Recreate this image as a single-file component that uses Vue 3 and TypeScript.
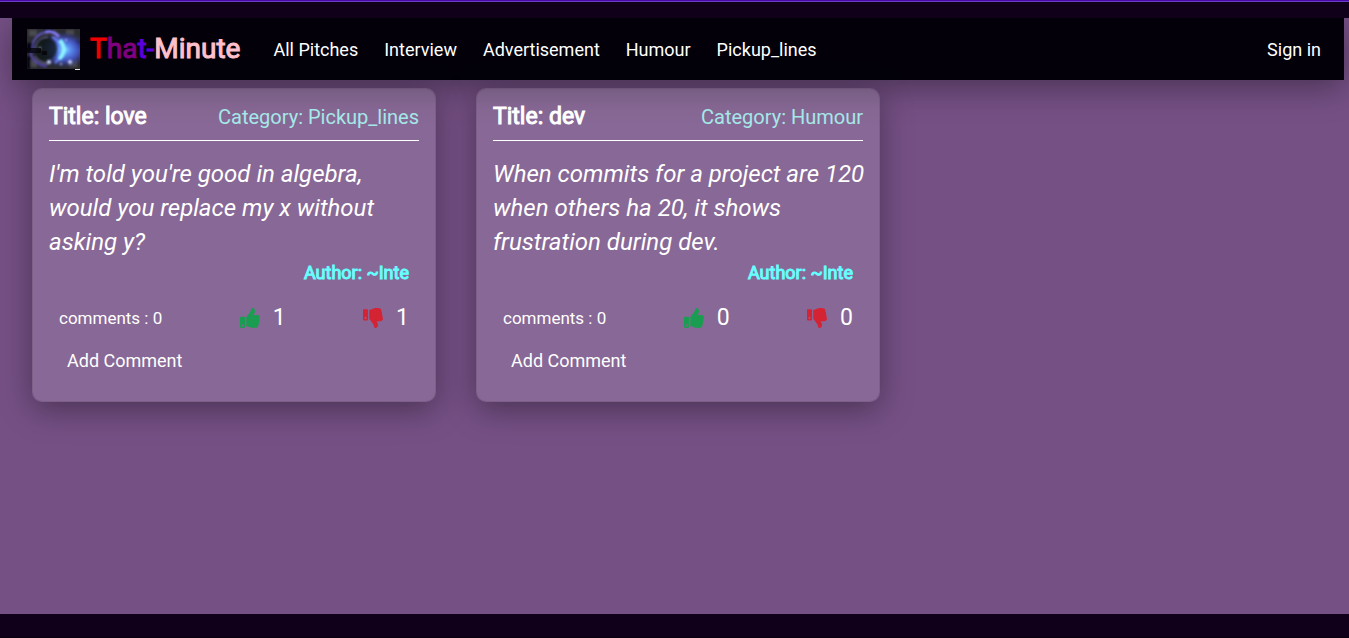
<script setup lang="ts">
interface Pitch {
  id: number
  title: string
  category: string
  text: string
  author: string
  comments: number
  likes: number
  dislikes: number
}

const categories: string[] = ['All Pitches', 'Interview', 'Advertisement', 'Humour', 'Pickup_lines']

const pitches: Pitch[] = [
  {
    id: 1,
    title: 'love',
    category: 'Pickup_lines',
    text: "I'm told you're good in algebra, would you replace my x without asking y?",
    author: '~Inte',
    comments: 0,
    likes: 1,
    dislikes: 1,
  },
  {
    id: 2,
    title: 'dev',
    category: 'Humour',
    text: 'When commits for a project are 120 when others ha 20, it shows frustration during dev.',
    author: '~Inte',
    comments: 0,
    likes: 0,
    dislikes: 0,
  },
]
</script>

<template>
  <div class="page">
    <div class="content">
      <nav class="navbar">
        <a class="brand" href="#">
          <svg class="logo" viewBox="0 0 53 41" aria-hidden="true">
            <defs>
              <radialGradient id="glow" cx="0.7" cy="0.52" r="0.46">
                <stop offset="0" stop-color="#8cdcff" />
                <stop offset="0.25" stop-color="#5a92f4" />
                <stop offset="0.6" stop-color="#4656cc" stop-opacity="0.85" />
                <stop offset="1" stop-color="#30307a" stop-opacity="0" />
              </radialGradient>
              <filter id="soft" x="-20%" y="-20%" width="140%" height="140%">
                <feGaussianBlur stdDeviation="0.8" />
              </filter>
            </defs>
            <rect width="53" height="40" fill="#2b2c30" />
            <g filter="url(#soft)">
              <path d="M0 14h7v10H0zM0 27h3v13H0zM17 0h9v3h-9zM46 12h7v8h-7z" fill="#050508" />
              <path d="M2 1h8v6H2zM39 1h8v5h-8zM4 31h6v7H4zM42 31h8v7h-8z" fill="#4a4c50" />
            </g>
            <rect width="53" height="40" fill="url(#glow)" />
            <ellipse cx="18" cy="20" rx="12" ry="12" fill="#101218" opacity="0.8" filter="url(#soft)" />
            <g fill="none" filter="url(#soft)">
              <path d="M6 24C3 12 11 3 22 3" stroke="#6457c4" stroke-width="2" />
              <path d="M3 22c1 8 8 15 17 15" stroke="#5a48c0" stroke-width="2" />
              <path d="M9 23C7 14 13 8 21 8M8 27c3 5 8 8 14 7" stroke="#8d8cc4" stroke-width="1" />
              <path d="M18 3c7-2 11 1 14 5" stroke="#8a80ff" stroke-width="3" />
              <path d="M25 8c10 4 12 18 3 26" stroke="#6f86ff" stroke-width="2" />
              <path d="M33 11c5 6 5 14-1 19" stroke="#8cf4ff" stroke-width="4" />
            </g>
            <g fill="#c8d6ff" filter="url(#soft)">
              <circle cx="13" cy="19" r="1" />
              <circle cx="39" cy="11" r="1" />
              <circle cx="43" cy="33" r="2" />
              <circle cx="34" cy="35" r="1" />
              <circle cx="22" cy="33" r="2" />
            </g>
            <path d="M0 19h14v5H0zM15 22h5v4h-5z" fill="#040408" opacity="0.8" />
            <path d="M48 40h5v1h-5z" fill="#e8e8dc" />
          </svg>
          <span class="brand-name"
            ><span class="red">T</span><span class="purple">ha</span><span class="indigo">t-</span>Minute</span
          >
        </a>
        <ul class="links">
          <li v-for="name in categories" :key="name"><a href="#">{{ name }}</a></li>
        </ul>
        <a class="sign-in" href="#">Sign in</a>
      </nav>

      <main class="grid">
        <article v-for="pitch in pitches" :key="pitch.id" class="card">
          <header class="card-head">
            <h2>Title: {{ pitch.title }}</h2>
            <span class="category">Category: {{ pitch.category }}</span>
          </header>
          <p class="text">{{ pitch.text }}</p>
          <p class="author">Author: {{ pitch.author }}</p>
          <div class="stats">
            <span class="comments">comments : {{ pitch.comments }}</span>
            <button class="vote up" type="button" aria-label="Like">
              <svg viewBox="0 0 512 512" aria-hidden="true">
                <path
                  d="M104 224H24c-13.255 0-24 10.745-24 24v240c0 13.255 10.745 24 24 24h80c13.255 0 24-10.745 24-24V248c0-13.255-10.745-24-24-24zM64 472c-13.255 0-24-10.745-24-24s10.745-24 24-24 24 10.745 24 24-10.745 24-24 24zM384 81.452c0 42.416-25.97 66.208-33.277 94.548h101.723c33.397 0 59.397 27.746 59.553 58.098.084 17.938-7.546 37.249-19.439 49.197l-.11.11c9.836 23.337 8.237 56.037-9.308 79.469 8.681 25.895-.069 57.704-16.382 74.757 4.298 17.598 2.244 32.575-6.148 44.632C440.202 511.587 389.616 512 346.839 512l-2.845-.001c-48.287-.017-87.806-17.598-119.56-31.725-15.957-7.099-36.821-15.887-52.651-16.178-6.54-.12-11.783-5.457-11.783-11.998v-213.77c0-3.2 1.282-6.271 3.558-8.521 39.614-39.144 56.648-80.587 89.117-113.111 14.804-14.832 20.188-37.236 25.393-58.902C282.515 39.293 291.817 0 312 0c24 0 72 8 72 81.452z"
                />
              </svg>
              <span>{{ pitch.likes }}</span>
            </button>
            <button class="vote down" type="button" aria-label="Dislike">
              <svg viewBox="0 0 512 512" aria-hidden="true">
                <path
                  d="M0 56v240c0 13.255 10.745 24 24 24h80c13.255 0 24-10.745 24-24V56c0-13.255-10.745-24-24-24H24C10.745 32 0 42.745 0 56zm40 200c0-13.255 10.745-24 24-24s24 10.745 24 24-10.745 24-24 24-24-10.745-24-24zm272 256c-20.183 0-29.485-39.293-33.931-57.795-5.206-21.666-10.589-44.07-25.393-58.902-32.469-32.524-49.503-73.967-89.117-113.111a11.98 11.98 0 0 1-3.558-8.521V59.901c0-6.541 5.243-11.878 11.783-11.998 15.831-.29 36.694-9.079 52.651-16.178C256.189 17.598 295.709.017 343.995 0h2.844c42.777 0 93.363.413 113.774 29.737 8.392 12.057 10.446 27.034 6.148 44.632 16.312 17.053 25.063 48.863 16.382 74.757 17.544 23.432 19.143 56.132 9.308 79.469l.11.11c11.893 11.949 19.523 31.259 19.439 49.197-.156 30.352-26.157 58.098-59.553 58.098H350.723C358.03 364.34 384 388.132 384 430.548 384 504 336 512 312 512z"
                />
              </svg>
              <span>{{ pitch.dislikes }}</span>
            </button>
          </div>
          <a class="add" href="#">Add Comment</a>
        </article>
      </main>
    </div>
  </div>
</template>

<style>
body {
  margin: 0;
  background: #110019;
}
</style>

<style scoped>
.page {
  box-sizing: border-box;
  min-height: 100vh;
  display: flex;
  flex-direction: column;
  padding: 17px 0 23px;
  border-top: 1px solid #4a08a8;
  border-bottom: 1px solid #06000a;
  background: #110019;
  box-shadow: inset 0 1px #6840c4;
  color: #fff;
  font-family: Roboto, sans-serif;
  font-size: 18px;
  line-height: 24px;
}

a {
  color: inherit;
  text-decoration: none;
}

.content {
  flex: 1;
  padding: 0 5px 0 12px;
  background: #755085;
  overflow: hidden;
}

.navbar {
  display: flex;
  align-items: center;
  box-sizing: border-box;
  height: 62px;
  padding: 0 23px 0 15px;
  background: #030009;
  box-shadow: 0 8px 32px rgba(0, 0, 0, 0.37);
}

.brand {
  display: flex;
  align-items: center;
  gap: 10px;
}

.logo {
  width: 53px;
  height: 41px;
}

.brand-name {
  color: #ffc0cb;
  font-size: 28px;
  line-height: 32px;
  -webkit-text-stroke: 1px currentColor;
}

.red {
  color: #f00000;
}

.purple {
  color: #800080;
}

.indigo {
  color: #5a00dc;
}

.links {
  display: flex;
  gap: 26px;
  margin: 0 0 0 33px;
  padding: 2px 0 0;
  list-style: none;
}

.sign-in {
  margin-left: auto;
  padding-top: 2px;
}

.grid {
  display: grid;
  grid-template-columns: repeat(3, 1fr);
  gap: 40px;
  padding: 8px 20px;
}

.card {
  padding: 12px 16px 28px;
  border: 1px solid rgba(150, 140, 155, 0.25);
  border-radius: 10px;
  background: rgba(255, 255, 255, 0.14);
  background-clip: padding-box;
  box-shadow: 0 8px 32px rgba(0, 0, 0, 0.37);
}

.card-head {
  display: flex;
  align-items: center;
  justify-content: space-between;
  padding-bottom: 7px;
  border-bottom: 1px solid #fff;
}

h2 {
  margin: 0;
  font-size: 23px;
  font-weight: 400;
  line-height: 32px;
  -webkit-text-stroke: 1px currentColor;
}

.category {
  color: #a5e8e8;
  font-size: 20px;
}

.text {
  margin: 16px -4px 0 0;
  font-size: 24px;
  font-style: italic;
  line-height: 34px;
}

.author {
  margin: 2px 10px 0 0;
  color: #6ff;
  text-align: right;
  -webkit-text-stroke: 1px currentColor;
}

.stats {
  display: grid;
  grid-template-columns: 1fr 1fr 1fr;
  align-items: center;
  margin-top: 16px;
}

.comments {
  padding-left: 10px;
  font-size: 17px;
}

.vote {
  display: flex;
  align-items: center;
  justify-content: flex-end;
  gap: 13px;
  padding: 0 10px 0 0;
  border: 0;
  background: none;
  color: inherit;
  font-family: inherit;
  font-size: 23px;
  line-height: 34px;
}

.vote svg {
  width: 20px;
  height: 20px;
}

.up svg {
  fill: #1b9d51;
}

.down svg {
  fill: #d42332;
}

.add {
  display: inline-block;
  margin: 14px 0 0 18px;
}
</style>
